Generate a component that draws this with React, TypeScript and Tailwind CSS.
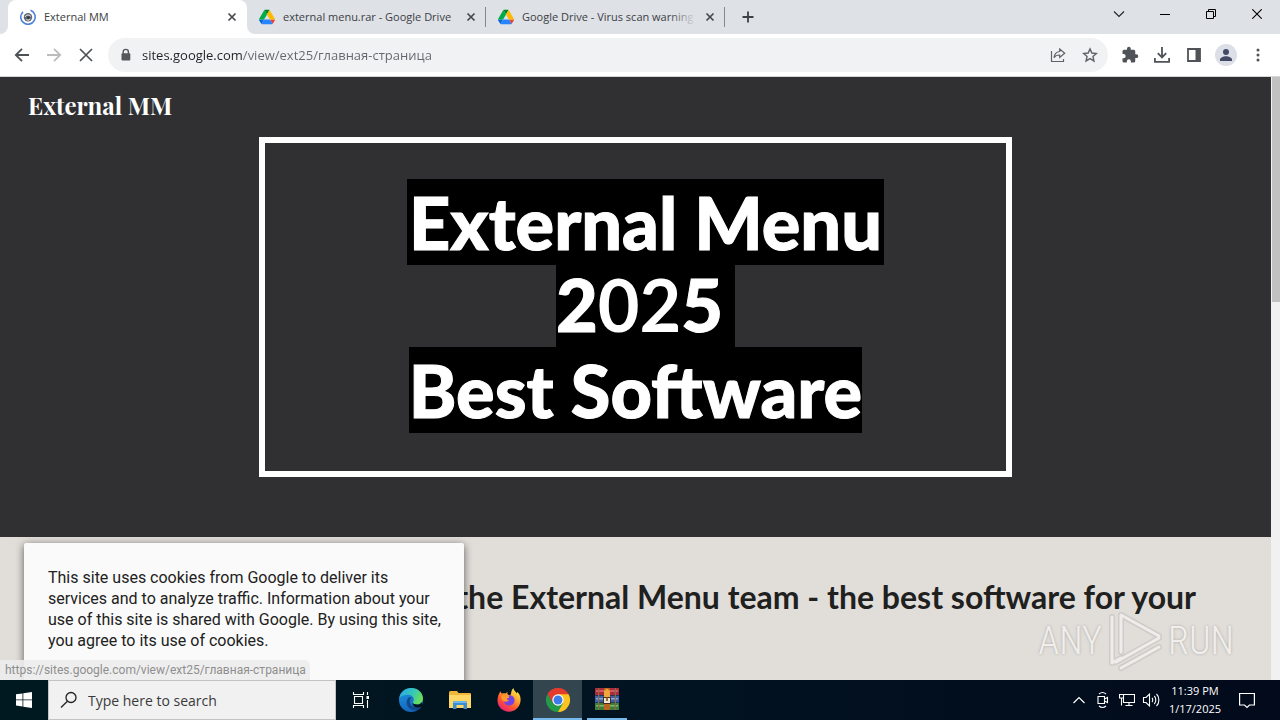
import React from 'react';

type TabProps = { title: string; active?: boolean; icon: React.ReactNode; divider?: boolean; fade?: boolean };

const CloseGlyph = () => (
  <svg width="16" height="16" viewBox="0 0 16 16" fill="none" stroke="#45494d" strokeWidth="1.7">
    <path d="M4.500 4.500l7 7M11.500 4.500l-7 7" />
  </svg>
);

const LoadingIcon = () => (
  <svg width="16" height="16" viewBox="0 0 16 16" fill="none">
    <path d="M3 2.8A7.2 7.2 0 1 0 10.5 1.3" stroke="#4c82d8" strokeWidth="1.6" />
    <circle cx="8" cy="8.2" r="4.2" fill="#5f6670" />
    <path d="M5.2 7.8c1-2.2 4-2.4 5.6-.4M6.4 10.6c1.4.9 3 .5 3.8-.8" stroke="#fff" strokeWidth="1" />
    <circle cx="8.4" cy="8.6" r="1.3" fill="#2f3540" />
  </svg>
);

const DriveIcon = () => (
  <svg width="16" height="16" viewBox="0 0 87.3 78">
    <path d="m6.6 66.85 3.85 6.65c.8 1.4 1.95 2.5 3.3 3.3l13.75-23.8h-27.5c0 1.55.4 3.1 1.2 4.5z" fill="#0066da" />
    <path d="m43.65 25-13.75-23.8c-1.35.8-2.5 1.9-3.3 3.3l-25.4 44a9.06 9.06 0 0 0-1.2 4.5h27.5z" fill="#00ac47" />
    <path d="m73.55 76.8c1.35-.8 2.5-1.9 3.3-3.3l1.6-2.75 7.65-13.25c.8-1.4 1.2-2.95 1.2-4.5h-27.502l5.852 11.5z" fill="#ea4335" />
    <path d="m43.65 25 13.75-23.8c-1.35-.8-2.9-1.2-4.5-1.2h-18.5c-1.6 0-3.15.45-4.5 1.2z" fill="#00832d" />
    <path d="m59.8 53h-32.3l-13.75 23.8c1.35.8 2.9 1.2 4.5 1.2h50.8c1.6 0 3.15-.45 4.5-1.2z" fill="#2684fc" />
    <path d="m73.4 26.5-12.7-22c-.8-1.4-1.95-2.5-3.3-3.3l-13.75 23.8 16.15 28h27.45c0-1.55-.4-3.1-1.2-4.5z" fill="#ffba00" />
  </svg>
);

function Tab({ title, active, icon, divider, fade }: TabProps) {
  return (
    <div
      role="tab"
      aria-selected={!!active}
      className={
        active
          ? 'relative flex w-[239px] items-center gap-2 rounded-t-lg bg-white pl-3 pr-[7px]'
          : 'relative flex w-[239px] items-center gap-2 pl-3 pr-[7px]'
      }
    >
      {active && (
        <>
          <svg className="absolute bottom-0 -left-2" width="8" height="8"><path d="M8 0v8H0a8 8 0 0 0 8-8z" fill="#fff" /></svg>
          <svg className="absolute bottom-0 -right-2" width="8" height="8"><path d="M0 0v8h8a8 8 0 0 1-8-8z" fill="#fff" /></svg>
        </>
      )}
      {icon}
      <span className="relative min-w-0 flex-1 whitespace-nowrap text-[11px] text-[#3c4043]">
        {title}
        {fade && <span className="absolute inset-y-0 -right-2 w-8 bg-linear-to-r from-transparent to-[#dee1e6] to-80%" />}
      </span>
      <button aria-label={`Close ${title}`} className="relative size-4"><CloseGlyph /></button>
      {divider && <span className="absolute right-0 h-5 w-px bg-[#85898f]" />}
    </div>
  );
}

function TabStrip() {
  return (
    <header className="flex h-[34px] shrink-0 bg-[#dee1e6] pl-2">
      <div role="tablist" className="flex">
        <Tab title="External MM" active icon={<LoadingIcon />} />
        <Tab title="external menu.rar - Google Drive" icon={<DriveIcon />} divider />
        <Tab title="Google Drive - Virus scan warning" icon={<DriveIcon />} divider fade />
      </div>
      <button aria-label="New tab" className="ml-2 grid w-[30px] place-items-center">
        <svg width="16" height="16" fill="none" stroke="#3c4043" strokeWidth="1.8"><path d="M8 2.5v11M2.5 8h11" /></svg>
      </button>
      <div className="ml-auto flex h-7">
        <button aria-label="Search tabs" className="grid w-[46px] place-items-center">
          <svg width="12" height="12" fill="none" stroke="#222" strokeWidth="1.1"><path d="M1 3.5l5 5 5-5" /></svg>
        </button>
        <button aria-label="Minimize" className="grid w-[46px] place-items-center">
          <svg width="10" height="10" stroke="#000"><path d="M0 5.5h10" /></svg>
        </button>
        <button aria-label="Restore" className="grid w-[46px] place-items-center">
          <svg width="10" height="10" fill="none" stroke="#000"><path d="M.5 2.500h7v7h-7zM2.500 2.500v-2h7v7h-2" /></svg>
        </button>
        <button aria-label="Close window" className="grid w-[46px] place-items-center">
          <svg width="10" height="10" stroke="#000" strokeWidth="1.1"><path d="M.3.3l9.400 9.400M9.700.3L.3 9.700" /></svg>
        </button>
      </div>
    </header>
  );
}

function IconButton({ label, children }: { label: string; children: React.ReactNode }) {
  return <button aria-label={label} className="grid size-8 shrink-0 place-items-center">{children}</button>;
}

function Toolbar() {
  return (
    <nav className="flex h-[43px] shrink-0 items-center border-b border-[#d5d6d8] bg-white px-1.5">
      <IconButton label="Back">
        <svg width="16" height="16" fill="none" stroke="#4d5155" strokeWidth="1.8"><path d="M15 8H2M8 1.8L1.8 8 8 14.2" /></svg>
      </IconButton>
      <IconButton label="Forward">
        <svg width="16" height="16" fill="none" stroke="#babcbe" strokeWidth="1.8"><path d="M1 8h13M8 1.8L14.2 8 8 14.2" /></svg>
      </IconButton>
      <IconButton label="Stop">
        <svg width="16" height="16" fill="none" stroke="#4d5155" strokeWidth="1.7"><path d="M2 2l12 12M14 2L2 14" /></svg>
      </IconButton>
      <div className="ml-1.5 flex h-[34px] flex-1 items-center rounded-full bg-[#f0f2f4] pl-3 pr-0.5">
        <svg width="12" height="14" className="shrink-0" fill="none">
          <path d="M3.2 6V4a2.6 2.6 0 0 1 5.2 0v2" stroke="#54585d" strokeWidth="1.4" />
          <rect x="1.5" y="5.2" width="8.8" height="7.3" rx="1" fill="#54585d" />
        </svg>
        <input
          aria-label="Address"
          defaultValue="sites.google.com/view/ext25/главная-страница"
          className="ml-2.5 h-6 min-w-0 flex-1 bg-[linear-gradient(90deg,#202124_101px,#63676c_101px)] bg-clip-text text-[13px] text-transparent outline-none"
        />
        <IconButton label="Share">
          <svg width="16" height="16" fill="none" stroke="#5f6368" strokeWidth="1.2">
            <path d="M1.5 4v10.5h12V12M9.7 2l5 4.2-5 4.3V8c-2.600-.1-4.400.8-5.700 2.700.4-3.400 2.300-5.700 5.700-6.200z" />
          </svg>
        </IconButton>
        <IconButton label="Bookmark">
          <svg width="16" height="16" fill="none" stroke="#5f6368" strokeWidth="1.4">
            <path d="M8 1.900l1.850 4.150 4.500.450-3.400 3 1 4.450L8 11.600l-3.950 2.350 1-4.450-3.400-3 4.500-.450z" />
          </svg>
        </IconButton>
      </div>
      <div className="ml-1.5 flex">
        <IconButton label="Extensions">
          <svg width="18" height="18" viewBox="0 0 24 24" fill="#4f5358">
            <path d="M20.500 11H19V7a2 2 0 0 0-2-2h-4V3.500a2.500 2.500 0 0 0-5 0V5H4a2 2 0 0 0-1.990 2v3.800H3.500a2.700 2.700 0 0 1 0 5.400H2V20a2 2 0 0 0 2 2h3.800v-1.500a2.700 2.700 0 0 1 5.400 0V22H17a2 2 0 0 0 2-2v-4h1.500a2.500 2.500 0 0 0 0-5z" />
          </svg>
        </IconButton>
        <IconButton label="Downloads">
          <svg width="18" height="18" fill="none" stroke="#4f5358" strokeWidth="1.8"><path d="M9 1v10M4.800 7.200L9 11.400l4.200-4.200M1.900 12v3.900h14.200V12" /></svg>
        </IconButton>
        <IconButton label="Side panel">
          <svg width="16" height="16"><path d="M2 2h12v12H2z" fill="none" stroke="#4f5358" strokeWidth="1.800" /><path d="M9.500 2H14v12H9.500z" fill="#4f5358" /></svg>
        </IconButton>
        <IconButton label="Profile">
          <svg width="22" height="22"><circle cx="11" cy="11" r="11" fill="#dcdee8" /><circle cx="11" cy="8" r="3" fill="#434965" /><path d="M5 17v-1.500c0-2 3.500-3.300 6-3.300s6 1.300 6 3.300V17z" fill="#434965" /></svg>
        </IconButton>
        <IconButton label="Menu">
          <svg width="4" height="16" fill="#4f5358"><circle cx="2" cy="3" r="1.500" /><circle cx="2" cy="8" r="1.500" /><circle cx="2" cy="13" r="1.500" /></svg>
        </IconButton>
      </div>
    </nav>
  );
}

function Watermark() {
  return (
    <div className="absolute right-[46px] bottom-2 flex items-center gap-1 font-['Roboto_Condensed','Roboto',sans-serif] text-[38px] leading-none font-light text-[#f1efed] [text-shadow:0_0_3px_#a9a5a1]">
      <span>ANY</span>
      <svg width="58" height="62" viewBox="0 0 58 62" fill="none" strokeLinejoin="round" strokeLinecap="round">
        <path d="M6 7v46M15 42V5l38 21M10 52l43-24M6 53l9-5M15 58l38-21" stroke="#cfcbc7" strokeWidth="6" />
        <path d="M6 7v46l9-5M15 42V5l38 21M10 52l43-24M15 58l38-21" stroke="#efedeb" strokeWidth="3" />
      </svg>
      <span>RUN</span>
    </div>
  );
}

function Page() {
  return (
    <main className="relative flex min-h-0 flex-1 overflow-hidden bg-[#e1deda]">
      <div className="min-w-0 flex-1">
        <section className="bg-[#303033] pb-[60px]">
          <div className="flex h-[60px] items-center pb-1 pl-7">
            <a href="#home" className="font-['Playfair_Display','Liberation_Serif',serif] text-2xl font-bold text-white">External MM</a>
          </div>
          <div className="mx-auto h-[340px] w-[753px] border-6 border-white pt-9 text-center font-['Lato',sans-serif] text-[72px] font-black text-white">
            <h1 className="[-webkit-text-stroke:1px_white]">
              <span className="block pl-5"><span className="mx-auto block w-fit bg-black px-0.5 leading-[86px]">External Menu</span></span>
              <span className="block pl-5"><span className="mx-auto block w-fit bg-black pr-3 pb-1 leading-[78px]">2<span className="font-bold [-webkit-text-stroke:0px]">02</span>5</span></span>
              <span className="mx-auto block w-fit bg-black leading-[86px]">Best Software</span>
            </h1>
          </div>
        </section>
        <section className="px-[75px] pt-10">
          <h2 className="whitespace-nowrap text-right font-['Lato',sans-serif] text-[32px] leading-10 font-bold text-[#20211e]">
            the External Menu team - the best software for your
          </h2>
        </section>
      </div>
      <div className="w-[9px] shrink-0 bg-[#f1f1f1] pl-px">
        <div className="h-[225px] bg-[#c1c1c1]" />
      </div>
      <aside className="absolute top-[466px] left-6 h-[200px] w-[440px] rounded-xs bg-[#fafafa] py-6 pr-4 pl-6 font-['Roboto',sans-serif] text-base leading-[21px] text-[#212121] shadow-[0_2px_8px_rgba(0,0,0,0.6)]">
        This site uses cookies from Google to deliver its services and to analyze traffic. Information about your use of this site is shared with Google. By using this site, you agree to its use of cookies.
      </aside>
      <Watermark />
      <div className="absolute bottom-0 left-0 h-5 rounded-tr-md bg-[#ececec]/90 pr-1 pl-[5px] font-['Roboto',sans-serif] text-xs leading-5 text-[#8e8e8e]">
        https://sites.google.com/view/ext25/главная-страница
      </div>
    </main>
  );
}

const EdgeIcon = () => (
  <svg width="24" height="24" viewBox="0 0 24 24">
    <defs>
      <linearGradient id="edgeA" x1="0" y1="0" x2="1" y2=".4"><stop stopColor="#2aa5e8" /><stop offset=".6" stopColor="#35c8b8" /><stop offset="1" stopColor="#66dd5e" /></linearGradient>
      <linearGradient id="edgeB" x1="0" y1="0" x2=".4" y2="1"><stop stopColor="#1b9ae0" /><stop offset="1" stopColor="#1663bd" /></linearGradient>
    </defs>
    <circle cx="12" cy="12" r="12" fill="url(#edgeB)" />
    <path d="M.3 10C1.500 4 6.300 0 12.200 0 19 0 24 5 24 10.500c0 3.500-2.600 6-6 6-2.500 0-4.200-1-4.200-2 0-.6 1.100-1 1.100-2.900 0-2.500-2.400-4.800-6-4.800C5 6.800 1.600 8.400.3 10z" fill="url(#edgeA)" />
    <path d="M9 10c-3 4-.8 11.500 5.500 12.300 3.300.4 6.200-1.200 7.900-3.600.4-.6-.1-.9-.6-.6-5.300 2.700-11 .1-11-4.600 0-1.700.7-3 2-4C11.200 8.900 9.800 9 9 10z" fill="#114a8b" />
    <path d="M13.800 14.500c0 1 1.700 2 4.200 2 2 0 3.700-.9 4.800-2.300L24 18l-2 1c-4.500 1.500-9-.5-8.200-4.500z" fill="#00161f" />
  </svg>
);

const FolderIcon = () => (
  <svg width="22" height="18" viewBox="0 0 22 18">
    <path d="M0 1.500Q0 0 1.500 0H8l1.500 2H21q1 0 1 1v14H0z" fill="#f0b63a" />
    <path d="M0 4h22v13H0z" fill="#ffd766" />
    <path d="M4 18v-6q0-2 2-2h10q2 0 2 2v6h-3.500v-4h-7v4z" fill="#3b8ed0" />
    <path d="M4 12q0-2 2-2h10q2 0 2 2z" fill="#69b8ea" />
  </svg>
);

const FirefoxIcon = () => (
  <svg width="24" height="24" viewBox="0 0 24 24">
    <defs><linearGradient id="ff" x1=".85" y1="0" x2=".2" y2="1"><stop stopColor="#fff44f" /><stop offset=".35" stopColor="#ffa92e" /><stop offset=".65" stopColor="#ff5634" /><stop offset="1" stopColor="#e3177d" /></linearGradient></defs>
    <path d="M3.500 3.300c.3 1.300.8 1.800 1.500 2.300 1-.5 2.500-.6 3.700-.2C9.300 4.600 10 4 11 3.700 9.800 5 10 6.500 12 7c1-.1 1.800-.4 2-1 .2-2.200.7-4.300 2.500-6 .2 3 2.300 3.500 3.300 5.300.5-.2.500-.8.300-1.500C22.600 6 24 9 23.500 13c-.6 6-5.400 10.700-11.500 10.700C5.500 23.700.5 19 .5 12.600c0-4 1.200-6.600 3-9.300z" fill="url(#ff)" />
    <path d="M12 7.300c3.200-.3 5.600 2 5.600 5s-2.300 5.200-5.400 5.200c-3 0-5.200-2.200-5.100-5 1.500 1 3.300.8 4.700-.4-1-.1-2-.3-2-1 0-.7 1.800-1 2.500-2-.9-.6-.8-1.400-.3-1.800z" fill="#7542e5" />
    <path d="M4.500 7.500C6.500 6.500 10 8 12.200 9c-.7 1-2.700 1.200-2.500 2.300 0 .7 1.300.9 2.400 1-2 2-4.200 1.500-6.100.5C4.500 11.500 4 9.500 4.500 7.500z" fill="#ff9a28" />
  </svg>
);

const ChromeIcon = () => (
  <svg width="24" height="24" viewBox="0 0 24 24">
    <path d="M12 12L1.600 6a12 12 0 0 1 20.800 0z" fill="#e33b2e" />
    <path d="M12 12V6h10.400A12 12 0 0 1 12 24z" fill="#fcc31e" />
    <path d="M12 12l5.200 3L12 24A12 12 0 0 1 1.600 6l5.200 9z" fill="#229a48" />
    <path d="M12 6.300h10.400A12 12 0 0 0 1.600 6l5.200 9z" fill="#e33b2e" />
    <circle cx="12" cy="12" r="5.700" fill="#fff" />
    <circle cx="12" cy="12" r="4.500" fill="#3b7de8" />
  </svg>
);

const ArchiveIcon = () => (
  <svg width="24" height="22" viewBox="0 0 24 22">
    <path d="M0 0h24v7H0z" fill="#a92b3c" /><path d="M1 2h22v2H1z" fill="#d65567" />
    <path d="M0 7.500h24v7H0z" fill="#3c5fa8" /><path d="M1 10h22v1.500H1z" fill="#86a8de" />
    <path d="M0 15h24v7H0z" fill="#3b7d3c" /><path d="M1 17h22v1.500H1z" fill="#80b765" />
    <path d="M3 0h1.200v22H3zM19.800 0H21v22h-1.200z" fill="#8d6c3c" />
    <path d="M9 0h6v22H9z" fill="#b8651d" /><path d="M9 3l3-2.500L15 3v6H9z" fill="#f2a53a" />
    <path d="M8 9h8v7H8z" fill="#4a2b20" /><path d="M9 10h6v5H9z" fill="#efe6ce" /><path d="M11.200 9h1.600v4h-1.600z" fill="#7b4b24" />
  </svg>
);

function Taskbar() {
  return (
    <footer className="flex h-10 shrink-0 bg-linear-to-r from-[#001920] via-[#011321] to-[#020a1b] text-white">
      <button aria-label="Start" className="grid w-12 place-items-center">
        <svg width="16" height="16" fill="#fff"><path d="M0 2.300L6.500 1.400v6.100H0zM7.300 1.300L16 0v7.500H7.300zM0 8.300h6.500v6.200L0 13.600zM7.300 8.300H16V16l-8.700-1.300z" /></svg>
      </button>
      <label className="flex w-72 items-center border border-[#c4c4c4] bg-[#f1f1f1] pl-[11px]">
        <svg width="18" height="18" fill="none" stroke="#222" strokeWidth="1.300"><circle cx="11" cy="6.500" r="5" /><path d="M7.400 10.200L1 16.500" /></svg>
        <input aria-label="Search" placeholder="Type here to search" className="ml-2.5 min-w-0 flex-1 bg-transparent pt-0.5 text-sm outline-none placeholder:text-[#3a3a3a]" />
      </label>
      <button aria-label="Task view" className="grid w-[50px] place-items-center">
        <svg width="18" height="18" fill="none" stroke="#fff" strokeWidth="1.100"><path d="M1.500 1v2.500h10V1M1.500 17v-2.500h10V17M2.500 5.500h8v7h-8zM15.500 1v3M15.500 9v8" /><path d="M14.500 5h2.500v3h-2.500z" fill="#fff" stroke="none" /></svg>
      </button>
      <button aria-label="Edge" className="grid w-[49px] place-items-center"><EdgeIcon /></button>
      <button aria-label="File Explorer" className="grid w-[49px] place-items-center"><FolderIcon /></button>
      <button aria-label="Firefox" className="grid w-[49px] place-items-center"><FirefoxIcon /></button>
      <button aria-label="Chrome" className="grid w-[49px] place-items-center border-b-2 border-[#76b9ed] bg-[#334650] pt-0.5"><ChromeIcon /></button>
      <button aria-label="WinRAR" className="mx-[5px] grid w-10 place-items-center border-b-2 border-[#76b9ed]"><ArchiveIcon /></button>
      <div className="ml-auto flex pr-[13px]">
        <button aria-label="Hidden icons" className="grid w-6 place-items-center">
          <svg width="14" height="14" fill="none" stroke="#fff" strokeWidth="1.200"><path d="M1.500 10L7 4.500l5.500 5.500" /></svg>
        </button>
        <button aria-label="Meet now" className="grid w-6 place-items-center">
          <svg width="16" height="18" fill="none" stroke="#fff" strokeWidth="1.100"><path d="M3 5.500h6.500v7H3zM9.500 8l3-1.500v5l-3-1.500M4 3c2-1.700 5-1.700 7 0M4 15c2 1.700 5 1.700 7 0" /></svg>
        </button>
        <button aria-label="Network" className="grid w-6 place-items-center">
          <svg width="16" height="16" fill="none" stroke="#fff" strokeWidth="1.100"><path d="M5 2.500h10.500v8H4.500V6M10 10.500v3M6.500 13.500h7M.5 2.500h4v3.500h-4zM2.500 6v7.500" /></svg>
        </button>
        <button aria-label="Volume" className="grid w-6 place-items-center">
          <svg width="18" height="16" fill="none" stroke="#fff" strokeWidth="1.100"><path d="M1.500 5.500H4l3.500-3.500v12L4 10.500H1.500zM10 6c1 1 1 3 0 4M12.300 4c2 2 2 6 0 8M14.500 2c3.200 3 3.200 9 0 12" /></svg>
        </button>
        <button className="flex w-16 flex-col items-center justify-center whitespace-nowrap text-[11px] leading-[18px]">
          <span>11:39 PM</span>
          <span>1/17/2025</span>
        </button>
        <button aria-label="Notifications" className="grid w-10 place-items-center">
          <svg width="16" height="17" fill="none" stroke="#fff" strokeWidth="1.200"><path d="M.6 1.500h14.800v11.500h-4.900L8 15.500 5.500 13H.6z" /></svg>
        </button>
      </div>
    </footer>
  );
}

export default function App() {
  return (
    <div className="flex h-screen flex-col overflow-hidden font-['Open_Sans','Noto_Sans',sans-serif]">
      <TabStrip />
      <Toolbar />
      <Page />
      <Taskbar />
    </div>
  );
}
